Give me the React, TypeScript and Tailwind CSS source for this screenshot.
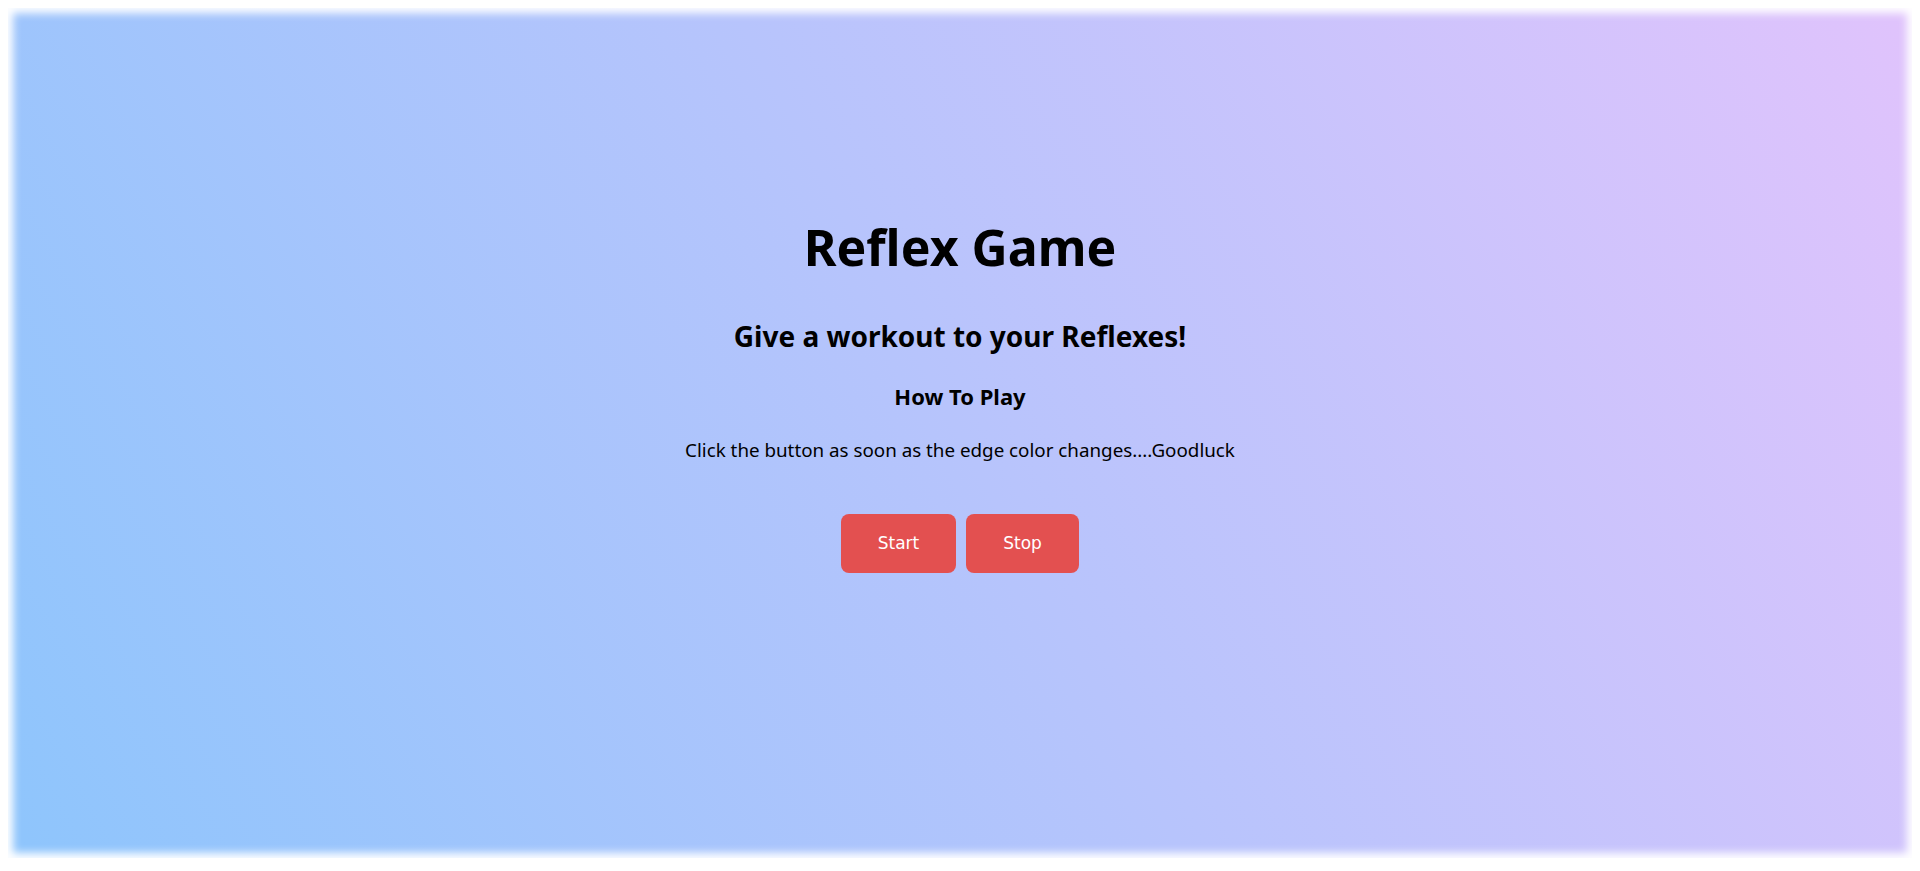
export default function App() {
  return (
    <div className="min-h-screen w-full bg-white p-[8px]">
      <main
        className="flex h-[850px] w-full flex-col items-center bg-[linear-gradient(62deg,#8ec5fc_0%,#e0c3fc_100%)] pt-[207px] text-black shadow-[inset_0_0_8px_5px_white]"
        style={{ fontFamily: '"Noto Sans", "Open Sans", sans-serif' }}
      >
        <h1 className="text-[50px] font-bold leading-[64px]">Reflex Game</h1>
        <h2 className="mt-[39px] text-[28px] font-bold leading-[36px]">
          Give a workout to your Reflexes!
        </h2>
        <h3 className="mt-[28px] text-[22px] font-bold leading-[28px]">How To Play</h3>
        <p className="mt-[26px] text-[18.8px] leading-[28px]">
          Click the button as soon as the edge color changes....Goodluck
        </p>
        <div className="mt-[50px] flex gap-[10px]">
          <button
            className="h-[59px] w-[115px] rounded-[8px] bg-[#e35050] text-[17px] text-white"
            style={{ fontFamily: '"DejaVu Sans", sans-serif' }}
          >
            Start
          </button>
          <button
            className="h-[59px] w-[113px] rounded-[8px] bg-[#e35050] text-[17px] text-white"
            style={{ fontFamily: '"DejaVu Sans", sans-serif' }}
          >
            Stop
          </button>
        </div>
      </main>
    </div>
  )
}
